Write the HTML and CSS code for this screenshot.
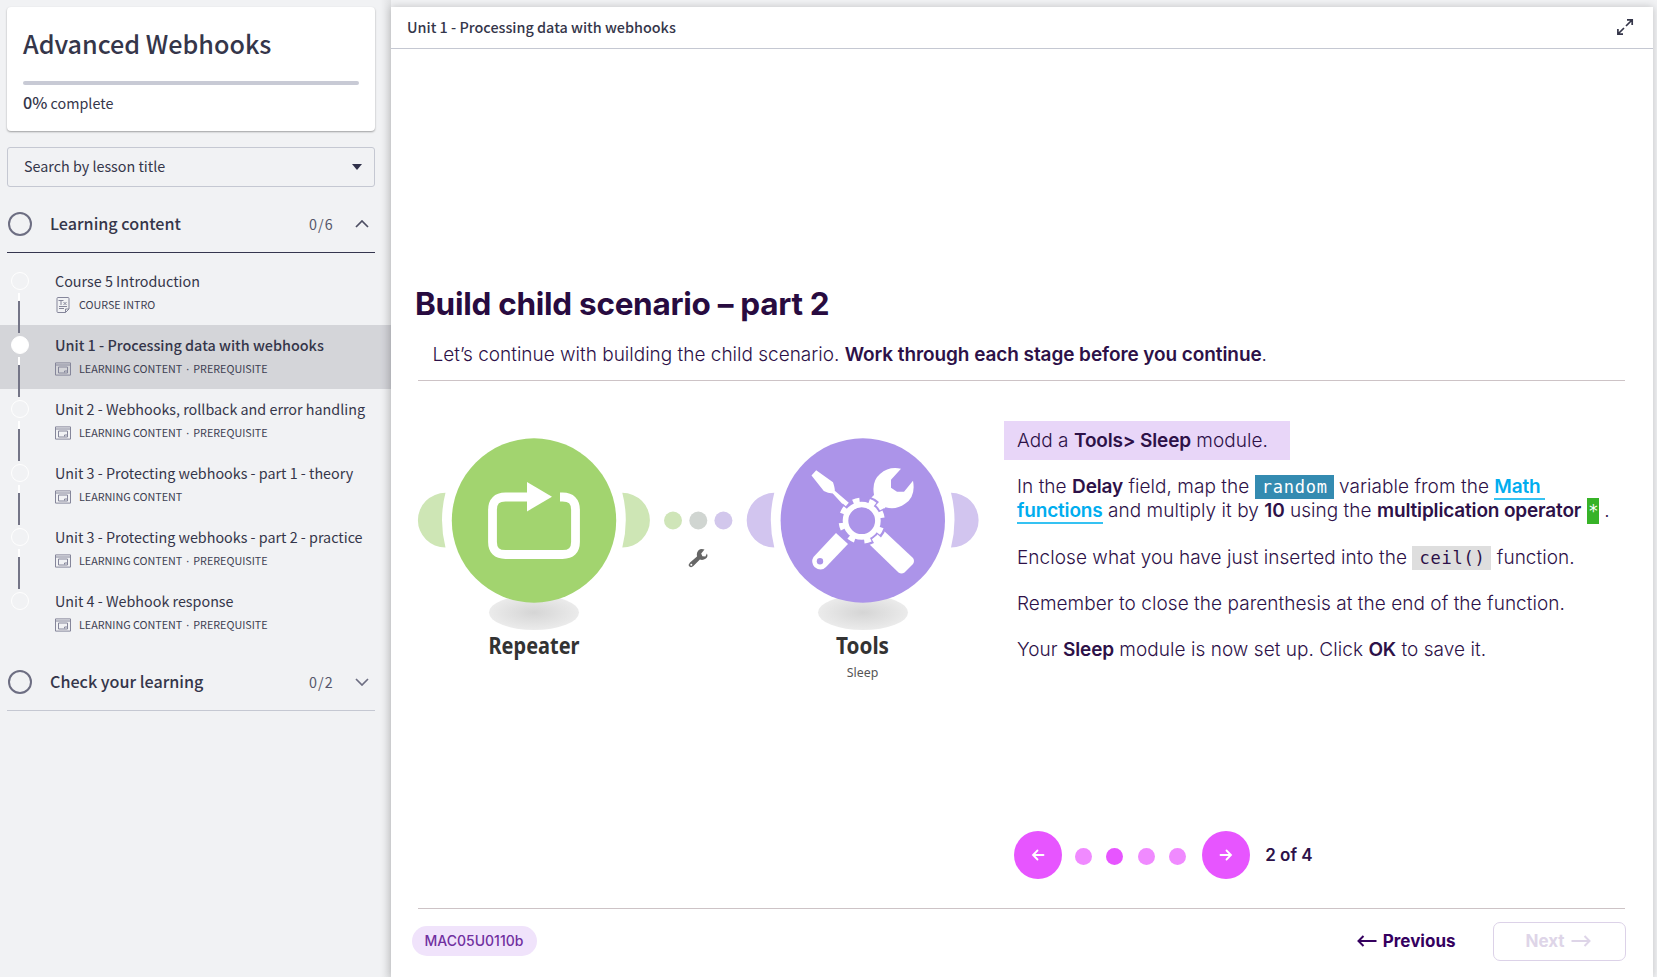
FILE: index.html
```html
<!DOCTYPE html>
<html lang="en">
<head>
<meta charset="utf-8">
<title>Advanced Webhooks</title>
<link rel="stylesheet" href="styles.css">
</head>
<body>
<svg width="0" height="0" class="defs">
  <symbol id="window" viewBox="0 0 16 14"><g fill="none" stroke="currentColor"><path d="M.5 .9h15v12.2H.5zM.5 3h15"/><path d="M3.500 5h9v6h-9z"/><path d="M9.500 10.500v-1.500h3"/></g></symbol>
  <symbol id="doc" viewBox="0 0 14 16"><path d="M2 .5h10q1 0 1 1V12l-3.500 3.500H2q-1 0-1-1v-13q0-1 1-1zM13 12H9.500v3.500M3 9.500h8M3 11.500h5M2.500 3.500h5M5 3.500v4.500M7.500 5l3 3M10.500 5l-3 3" fill="none" stroke="currentColor"/></symbol>
  <symbol id="left" viewBox="0 0 20 12"><path d="M19.500 6H1.500M6.500 1l-5 5 5 5" fill="none" stroke="currentColor" stroke-width="2"/></symbol>
</svg>
<div class="app">
  <aside class="sidebar">
    <section class="course-card">
      <h1>Advanced Webhooks</h1>
      <div class="bar"></div>
      <p><b>0%</b> complete</p>
    </section>
    <div class="search"><span>Search by lesson title</span><i class="caret"></i></div>
    <div class="section open">
      <i class="ring"></i><h2>Learning content</h2><span class="count">0/6</span>
      <svg class="chev" viewBox="0 0 14 8"><path d="M1 7l6-6 6 6"/></svg>
    </div>
    <ul class="lessons">
      <li><span class="t">Course 5 Introduction</span><span class="m"><svg class="doc"><use href="#doc"/></svg>COURSE INTRO</span></li>
      <li class="active"><span class="t">Unit 1 - Processing data with webhooks</span><span class="m"><svg><use href="#window"/></svg>LEARNING CONTENT<i>·</i>PREREQUISITE</span></li>
      <li><span class="t">Unit 2 - Webhooks, rollback and error handling</span><span class="m"><svg><use href="#window"/></svg>LEARNING CONTENT<i>·</i>PREREQUISITE</span></li>
      <li><span class="t">Unit 3 - Protecting webhooks - part 1 - theory</span><span class="m"><svg><use href="#window"/></svg>LEARNING CONTENT</span></li>
      <li><span class="t">Unit 3 - Protecting webhooks - part 2 - practice</span><span class="m"><svg><use href="#window"/></svg>LEARNING CONTENT<i>·</i>PREREQUISITE</span></li>
      <li><span class="t">Unit 4 - Webhook response</span><span class="m"><svg><use href="#window"/></svg>LEARNING CONTENT<i>·</i>PREREQUISITE</span></li>
    </ul>
    <div class="section">
      <i class="ring"></i><h2>Check your learning</h2><span class="count">0/2</span>
      <svg class="chev closed" viewBox="0 0 14 8"><path d="M1 1l6 6 6-6"/></svg>
    </div>
  </aside>
  <main class="player">
    <header class="top"><span>Unit 1 - Processing data with webhooks</span>
      <svg class="expand" viewBox="0 0 18 18"><path d="M11 1.900h5.200v5.200M16 2l-6 6M7 16.200H1.900V11M2 16l6-6"/></svg>
    </header>
    <div class="stage">
      <h2 class="title">Build child scenario – part 2</h2>
      <p class="lead">Let’s continue with building the child scenario. <b>Work through each stage before you continue</b>.</p>
      <div class="columns">
        <svg class="flow" width="580" height="270" viewBox="410 420 580 270">
          <defs><radialGradient id="sh"><stop offset="0" stop-color="#d5d5d5"/><stop offset="1" stop-color="#ebebeb"/></radialGradient></defs>
          <g fill="#cee6b5"><path d="M445.500 492.800A27.600 27.350 0 0 0 445.500 547.500Q438.500 520 445.500 492.800z"/><path d="M622.300 492.800A27.600 27.350 0 0 1 622.300 547.500Q629.300 520 622.300 492.800z"/></g>
          <g fill="#d2c5ef"><path d="M774.300 492.800A27.600 27.350 0 0 0 774.300 547.500Q767.300 520 774.300 492.800z"/><path d="M951 492.800A27.600 27.350 0 0 1 951 547.500Q958 520 951 492.800z"/></g>
          <g fill="url(#sh)"><ellipse cx="534" cy="612.500" rx="45" ry="17.500"/><ellipse cx="863" cy="612.500" rx="45" ry="17.500"/></g>
          <circle cx="534" cy="520.500" r="82.200" fill="#a2d46f"/>
          <circle cx="862.800" cy="520.500" r="82.200" fill="#ac94e9"/>
          <circle cx="673" cy="520.500" r="9" fill="#cfe5b8"/><circle cx="698.300" cy="520.500" r="9" fill="#d0d5d1"/><circle cx="723.400" cy="520.500" r="9" fill="#d2c7ec"/>
          <path d="M560 497h2.500q13 0 13 13v32q0 12.500-13 12.500h-57q-13 0-13-12.500v-32q0-13 13-13H528" fill="none" stroke="#fff" stroke-width="8.800"/>
          <path d="M527 482l25 14.700-25 14.700z" fill="#fff"/>
          <g transform="translate(-.5 .5)"><path d="M690.500 562l7-6q-1-5 3-7.200 2-.5 4.500.2l-3.300 4 1.200 2.700 3 .3 1.500-3q1.500 3-1 5-3 2.200-6 1l-6.500 6.500q-2 2-4 .5-1.500-2 .6-4z" fill="#666"/>
          <circle cx="691.800" cy="564.200" r="1" fill="#fff"/></g>
          <g fill="#fff">
            <path d="M811.500 475.500l4.700-5.200 16.800 12q2 6 1.800 8.500l14 12-3.600 4.200-12.400-13.500q-5-.5-9-2.500z"/>
            <path d="M901 468.700l-10 11v8l6 4h7l9-11q3 16-8 23-9 6.500-19.500 3.500L878 515l-12-12 8-8q-2.500-14 6-21 9-8 21-5.300z"/>
            <path d="M836 533l12 11-22 23q-5 5-11.500 0-4-5-1-10z"/>
            <path d="M882 529l31 29q2 3 0 6l-8.500 8.500q-3 2-6 0L868 543z"/>
          </g>
          <g fill="none" transform="translate(861.700 520.700)">
            <circle r="21" fill="#ac94e9"/>
            <circle r="22" stroke="#ac94e9" stroke-width="7" stroke-dasharray="9.500 7.780" transform="rotate(-29.400)"/>
            <circle r="20.500" stroke="#fff" stroke-width="5.200" stroke-dasharray="6.600 9.500" transform="rotate(-26.200)"/>
            <circle r="16.200" stroke="#fff" stroke-width="5.600"/>
          </g>
          <circle cx="820" cy="561.300" r="3.200" fill="#ac94e9"/>
          <text class="mod" x="534" y="654" textLength="91" lengthAdjust="spacingAndGlyphs">Repeater</text>
          <text class="mod" x="862.500" y="654" textLength="53" lengthAdjust="spacingAndGlyphs">Tools</text>
          <text class="sub" x="862.500" y="677" textLength="31.500" lengthAdjust="spacingAndGlyphs">Sleep</text>
        </svg>
        <div class="copy">
          <p class="hl">Add a <b>Tools&gt; Sleep</b> module.</p>
          <p class="tight">In the <b>Delay</b> field, map the <code class="blue">random</code> variable from the <a>Math&nbsp;</a><br><a>functions</a> and multiply it by <b>10</b> using the <b>multiplication operator</b> <code class="green">*</code> .</p>
          <p>Enclose what you have just inserted into the <code class="grey">ceil()</code> function.</p>
          <p>Remember to close the parenthesis at the end of the function.</p>
          <p>Your <b>Sleep</b> module is now set up. Click <b>OK</b> to save it.</p>
        </div>
      </div>
      <nav class="pager">
        <span class="go"><svg viewBox="0 0 14 12"><path d="M12.500 6H2M6.500 1.500L2 6l4.500 4.500"/></svg></span>
        <i></i><i class="on"></i><i></i><i></i>
        <span class="go nextgo"><svg viewBox="0 0 14 12"><path d="M1.500 6H12M7.500 1.500L12 6l-4.500 4.500"/></svg></span>
        <b>2 of 4</b>
      </nav>
      <footer>
        <span class="tag">MAC05U0110b</span>
        <span class="prev"><svg class="arrow"><use href="#left"/></svg>Previous</span>
        <span class="next">Next<svg class="arrow flip"><use href="#left"/></svg></span>
      </footer>
    </div>
  </main>
</div>
</body>
</html>
```

FILE: styles.css
```css
* { box-sizing: border-box; margin: 0; padding: 0; }
body { background: #f1f2f4; color: #35364a; font-family: "Noto Sans CJK SC", sans-serif; overflow: hidden; }
i { font-style: normal; }
.defs { position: absolute; }
.app { display: flex; height: 977px; }
.sidebar { width: 391px; flex: none; padding-top: 7px; background: linear-gradient(90deg, rgba(0,0,0,0) 380px, rgba(0,0,0,.07) 391px); }
.course-card { margin: 0 16px 0 7px; height: 124px; padding: 13px 16px 0; background: #fff; border-radius: 4px; box-shadow: 0 1px 2px rgba(0,0,0,.35); }
h1 { font-size: 25.150px; line-height: 46px; font-weight: 500; white-space: nowrap; }
.bar { height: 4px; margin-top: 15px; border-radius: 2px; background: #c8cad5; }
.course-card p { font-size: 14.340px; line-height: 24px; margin-top: 5px; }
.course-card b { font-weight: 500; font-size: 16.150px; }
.search { margin: 16px 16px 0 7px; height: 40px; border: 1px solid #c5c8d2; border-radius: 3px; display: flex; justify-content: space-between; align-items: center; padding: 0 12px 0 16px; font-size: 14.340px; line-height: 36px; }
.search span { padding-bottom: 2px; }
.caret { border: 5px solid transparent; border-top: 6px solid #30314a; border-bottom: 0; }
.section { height: 58px; margin: 8px 16px 0 7px; border-bottom: 1px solid #c5c8d2; display: flex; align-items: center; padding-right: 6px; }
.open { border-color: #35364f; }
.ring { width: 24px; height: 24px; border: 2px solid #6d6e82; border-radius: 50%; margin-left: 1px; }
.section h2 { flex: 1; margin-left: 18px; padding-bottom: 1px; font-size: 16.150px; font-weight: 500; line-height: 24px; }
.count { font-size: 14.340px; letter-spacing: 1.200px; color: #55566a; }
.chev { width: 14px; height: 8px; margin-left: 21px; fill: none; stroke: #4d4e63; stroke-width: 1.7; }
.closed { stroke: #6d6e82; }
.lessons { list-style: none; padding-top: 8px; }
.lessons li { position: relative; height: 64px; padding: 7px 0 0 55px; display: flex; flex-direction: column; }
.active { background: rgba(50,50,65,.15); }
.lessons li::before { content: ""; position: absolute; left: 11px; top: 11px; width: 16px; height: 16px; border: 1px solid #fff; border-radius: 50%; }
.lessons .active::before { background: #fff; }
.lessons li:not(:last-child)::after { content: ""; position: absolute; z-index: 1; left: 18px; top: 32px; width: 2px; height: 40px; background: linear-gradient(#fff 8px, #747587 8px); }
.t { font-size: 14.340px; line-height: 26px; white-space: nowrap; }
.active .t { font-weight: 500; font-size: 14.400px; }
.m { display: flex; align-items: center; font-size: 10.760px; line-height: 18px; color: #3d3e52; margin-top: 2px; white-space: nowrap; }
.m svg { width: 16px; height: 14px; margin-right: 8px; color: #85869a; }
.m svg.doc { width: 14px; height: 16px; margin: 0 9px 0 1px; }
.m i { width: 11px; text-align: center; font-family: "Noto Sans", sans-serif; }
.player { width: 1262px; margin-top: 7px; background: #fff; box-shadow: 0 0 8px rgba(0,0,0,.2); }
.top { height: 42px; border-bottom: 1px solid #c5c8d2; display: flex; align-items: center; justify-content: space-between; padding: 0 19px 1px 16px; font-size: 14.400px; font-weight: 500; line-height: 40px; }
.expand { width: 18px; height: 18px; fill: none; stroke: #35364a; stroke-width: 1.700; }
.stage { padding: 232px 28px 0 27px; color: #2d1148; font-family: Inter, sans-serif; }
.title { font-size: 31.500px; line-height: 45px; font-weight: 700; letter-spacing: -.28px; color: #280b40; margin-left: -3px; white-space: nowrap; }
.lead { height: 55px; padding: 14px 0 0 14.500px; border-bottom: 1px solid #cdc3c6; font-size: 19px; line-height: 30px; font-weight: 300; white-space: nowrap; }
.lead b { font-weight: 600; letter-spacing: -.08px; }
.copy b, .copy a { font-weight: 600; letter-spacing: -.16px; }
.columns { display: flex; margin: 39px 0 0 -8px; }
.flow { flex: none; }
.mod, .sub { font-family: "Noto Sans", sans-serif; text-anchor: middle; fill: #333; }
.mod { font-size: 22.500px; font-weight: 700; }
.sub { font-size: 13px; fill: #555; }
.copy { margin-left: 27px; padding-top: 1px; font-size: 19px; font-weight: 300; line-height: 24px; letter-spacing: .05px; white-space: nowrap; }
.copy p { margin-bottom: 22px; }
.copy .tight { margin-bottom: 23px; }
.copy .hl { width: 286px; height: 39px; background: #e8d6f8; padding: 8px 0 0 13px; margin: 0 0 15px -13px; }
.copy a { color: #00adef; border-bottom: 2px solid #35c2f2; }
code { font-family: "DejaVu Sans Mono", monospace; font-size: 17px; line-height: 20px; padding: 2px 6px 2px 7px; letter-spacing: .75px; }
.blue { background: #348bb1; color: #fff; }
.green { background: #37b328; color: #fff; padding: 3px .5px 3px 1.500px; letter-spacing: 0; }
.grey { background: #dedede; }
.pager { display: flex; align-items: center; height: 48px; margin: 141px 0 0 596px; }
.go { width: 48px; height: 48px; border-radius: 50%; background: #e755ff; display: flex; align-items: center; justify-content: center; margin-right: 13px; }
.go svg { width: 14px; height: 12px; fill: none; stroke: #fff; stroke-width: 1.8; stroke-linecap: round; }
.pager i { width: 17px; height: 17px; border-radius: 50%; background: #f08aff; margin: 2px 14.300px 0 0; }
.pager .on { background: #e755ff; }
.nextgo { margin: 0 15px 0 2px; }
.pager b { font-size: 17px; font-weight: 600; }
footer { margin-top: 29px; height: 69px; border-top: 1px solid #cdc3c6; display: flex; align-items: center; padding-bottom: 4px; }
.tag { margin-left: -6px; width: 125px; height: 30px; border-radius: 15px; background: #f0e3fb; color: #7030a0; font-size: 14px; font-weight: 500; line-height: 30px; text-align: center; padding-right: 1px; }
.prev { margin-left: auto; color: #35005f; font-weight: 700; font-size: 17px; display: flex; align-items: center; gap: 6px; }
.next { margin: 0 -.5px 0 37px; width: 133px; height: 39px; border: 1px solid #dcd2e8; border-radius: 7px; display: flex; align-items: center; justify-content: center; gap: 6px; padding-right: 2px; color: #ded5e8; font-size: 17px; font-weight: 700; }
.arrow { width: 20px; height: 12px; }
.flip { transform: scaleX(-1); }
```
